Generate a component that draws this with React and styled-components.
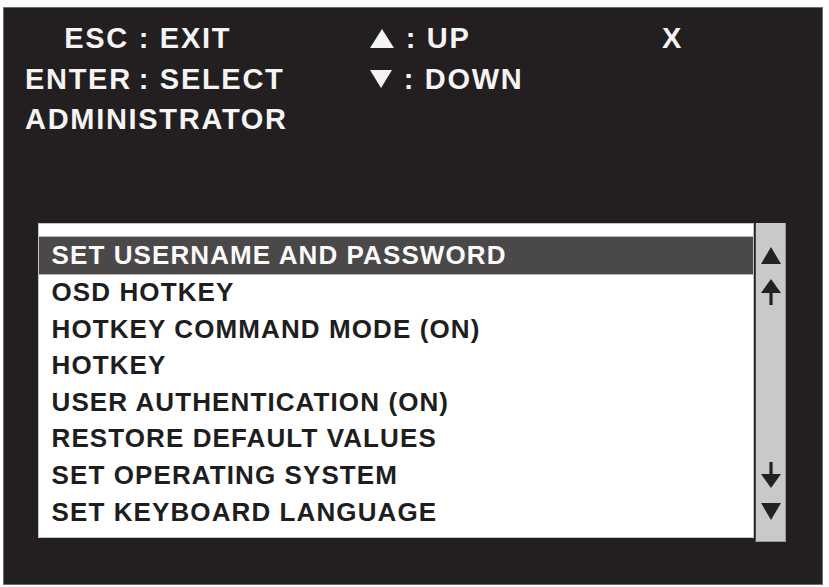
import styled, { createGlobalStyle } from "styled-components";

const GlobalStyle = createGlobalStyle`
  html, body {
    margin: 0;
    background: #fff;
  }
  body {
    font-family: "Liberation Sans", Arial, sans-serif;
  }
`;

const MENU = [
  "SET USERNAME AND PASSWORD",
  "OSD HOTKEY",
  "HOTKEY COMMAND MODE (ON)",
  "HOTKEY",
  "USER AUTHENTICATION (ON)",
  "RESTORE DEFAULT VALUES",
  "SET OPERATING SYSTEM",
  "SET KEYBOARD LANGUAGE",
];

const ROW = 36.6;

const Triangle = ({ down, w = 20, h = 17, color = "#222" }) => (
  <svg width={w} height={h} viewBox={`0 0 ${w} ${h}`}>
    <polygon
      fill={color}
      points={down ? `0,0 ${w},0 ${w / 2},${h}` : `${w / 2},0 ${w},${h} 0,${h}`}
    />
  </svg>
);

const Arrow = ({ down }) => (
  <svg width="20" height="26" viewBox="0 0 20 26">
    <polygon
      fill="#222"
      points="10,0 20,14 11.6,14 11.6,26 8.4,26 8.4,14 0,14"
      transform={down ? "rotate(180 10 13)" : undefined}
    />
  </svg>
);

const App = () => {
  return (
    <>
      <GlobalStyle />
      <Screen>
        <Header>
          <Key>ESC</Key>
          <Value> : EXIT</Value>
          <Nav>
            <Triangle w={24} h={19} color="#f4f4f4" />
            <Value> : UP</Value>
          </Nav>
          <Value>X</Value>
          <Key>ENTER</Key>
          <Value> : SELECT</Value>
          <Nav>
            <Triangle down w={22} h={18} color="#f4f4f4" />
            <Value> : DOWN</Value>
          </Nav>
          <span />
          <Title>ADMINISTRATOR</Title>
        </Header>
        <ListArea>
          <ListBox>
            {MENU.map((item, i) => (
              <Item key={item} $active={i === 0}>
                {item}
              </Item>
            ))}
          </ListBox>
          <Scrollbar>
            <Slot $row={1}>
              <Triangle />
            </Slot>
            <Slot $row={2}>
              <Arrow />
            </Slot>
            <Slot $row={7}>
              <Arrow down />
            </Slot>
            <Slot $row={8}>
              <Triangle down />
            </Slot>
          </Scrollbar>
        </ListArea>
      </Screen>
    </>
  );
};

export default App;

const Screen = styled.div`
  box-sizing: border-box;
  width: 820px;
  height: 578px;
  margin: 7px 0 0 3px;
  padding: 10px 0 0 21px;
  background: #231f20;
  border: 1px solid #6e6e6e;
  color: #f4f4f4;
`;

const Header = styled.div`
  display: grid;
  grid-template-columns: 104px 241px 292px auto;
  grid-auto-rows: 40.5px;
  font-size: 29px;
  font-weight: bold;
  letter-spacing: 1.7px;
  line-height: 40.5px;
`;

const Key = styled.span`
  text-align: right;
`;

const Value = styled.span`
  white-space: pre;
`;

const Nav = styled.span`
  display: flex;
  align-items: center;
  gap: 2px;
`;

const Title = styled.span`
  grid-column: 1 / -1;
`;

const ListArea = styled.div`
  display: flex;
  align-items: flex-start;
  margin: 83.5px 0 0 13px;
`;

const ListBox = styled.div`
  box-sizing: border-box;
  width: 716px;
  height: 315px;
  padding-top: 13.4px;
  background: #fff;
  border: 1px solid #c4c4c4;
`;

const Item = styled.div`
  height: ${ROW}px;
  line-height: ${ROW}px;
  padding-left: 12.5px;
  font-size: 26px;
  font-weight: bold;
  letter-spacing: 1.1px;
  white-space: nowrap;
  color: ${(p) => (p.$active ? "#fafafa" : "#1e1e1e")};
  background: ${(p) => (p.$active ? "#4a4848" : "transparent")};
  box-shadow: ${(p) => (p.$active ? "0 1px 0 #b0b0b0, 0 -1px 0 #b8b8b8" : "none")};
`;

const Scrollbar = styled.div`
  box-sizing: border-box;
  display: grid;
  grid-template-rows: repeat(8, ${ROW}px);
  justify-items: center;
  align-items: center;
  width: 31px;
  height: 319px;
  margin-left: 1px;
  padding-top: 14.4px;
  background: #c9c9c9;
  border-left: 1px solid #4a4a4a;
  border-right: 1px solid #9a9a9a;
  border-bottom: 1px solid #9a9a9a;
`;

const Slot = styled.div`
  grid-row: ${(p) => p.$row};
  display: flex;
`;
